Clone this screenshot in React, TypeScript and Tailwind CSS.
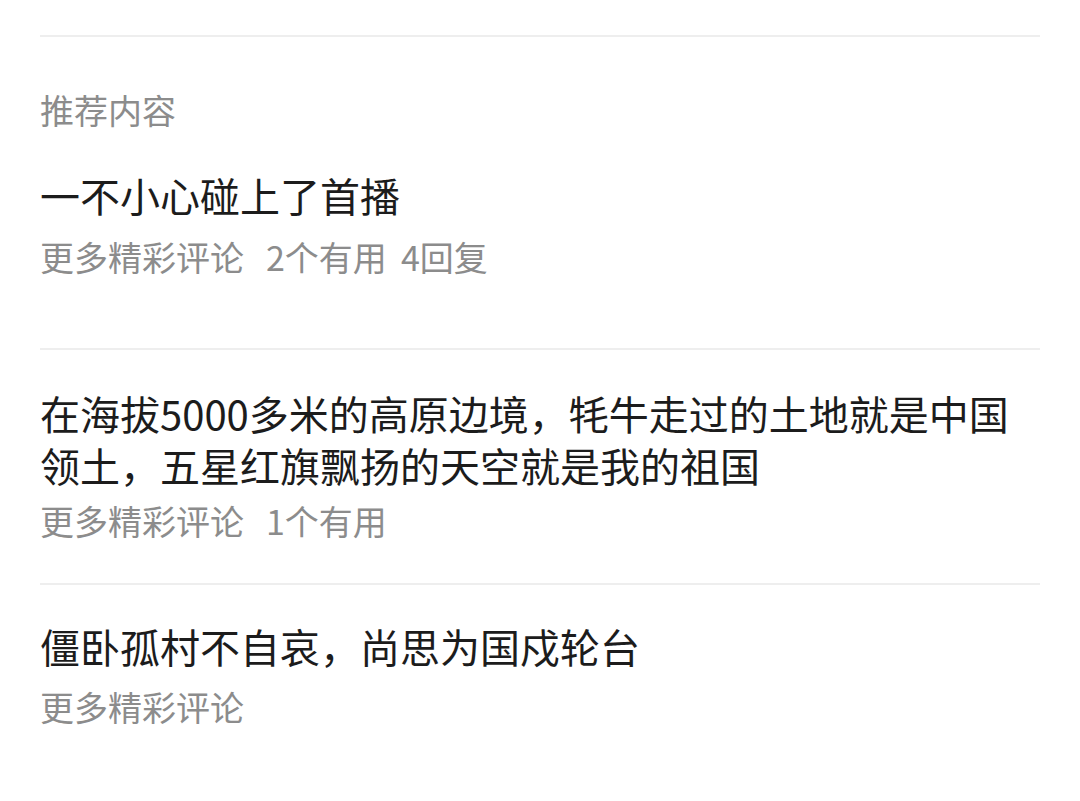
/**
 * Recommended content list
 * Divider-separated rows: title + grey meta line
 */

const font = { fontFamily: '"Noto Sans CJK SC", "Noto Sans", sans-serif' };

export default function App() {
  return (
    <div className="min-h-[801px] bg-white px-[40px] pt-[35px]" style={font}>
      <div className="h-[2px] bg-[#eeeeee]" />

      {/* Section heading */}
      <div className="mt-[49px] text-[34px] leading-[48px] text-[#8c8c8c]">推荐内容</div>

      {/* Item 1 */}
      <div className="mt-[35px] pb-[67px]">
        <div className="text-[40px] leading-[52px] text-[#1c1c1c]">一不小心碰上了首播</div>
        <div className="mt-[12px] text-[34px] leading-[48px] text-[#8c8c8c]">
          更多精彩评论
          <span className="ml-[22px]">2个有用</span>
          <span className="ml-[14px]">4回复</span>
        </div>
      </div>

      <div className="h-[2px] bg-[#eeeeee]" />

      {/* Item 2 */}
      <div className="pt-[37px] pb-[38px]">
        <div className="text-[40px] leading-[52px] text-[#1c1c1c]">
          在海拔5000多米的高原边境，牦牛走过的土地就是中国领土，五星红旗飘扬的天空就是我的祖国
        </div>
        <div className="mt-[6px] text-[34px] leading-[48px] text-[#8c8c8c]">
          更多精彩评论
          <span className="ml-[22px]">1个有用</span>
        </div>
      </div>

      <div className="h-[2px] bg-[#eeeeee]" />

      {/* Item 3 */}
      <div className="pt-[35px]">
        <div className="text-[40px] leading-[52px] text-[#1c1c1c]">僵卧孤村不自哀，尚思为国戍轮台</div>
        <div className="mt-[11px] text-[34px] leading-[48px] text-[#8c8c8c]">更多精彩评论</div>
      </div>
    </div>
  );
}
